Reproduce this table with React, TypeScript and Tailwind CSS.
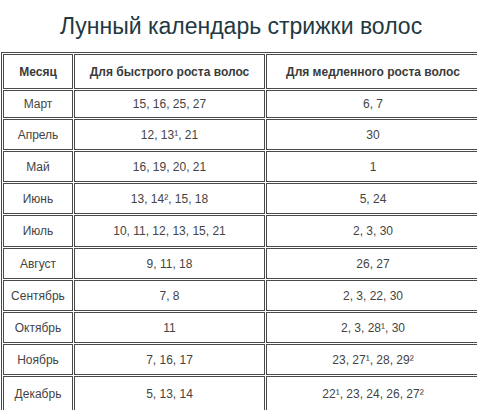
import React from "react";

const rows = [
    { month: "Март", fast: "15, 16, 25, 27", slow: "6, 7", h: "h-[28px]" },
    { month: "Апрель", fast: "12, 13¹, 21", slow: "30", h: "h-[31px]" },
    { month: "Май", fast: "16, 19, 20, 21", slow: "1", h: "h-[31px]" },
    { month: "Июнь", fast: "13, 14², 15, 18", slow: "5, 24", h: "h-[31px]" },
    { month: "Июль", fast: "10, 11, 12, 13, 15, 21", slow: "2, 3, 30", h: "h-[32px]" },
    { month: "Август", fast: "9, 11, 18", slow: "26, 27", h: "h-[31px]" },
    { month: "Сентябрь", fast: "7, 8", slow: "2, 3, 22, 30", h: "h-[31px]" },
    { month: "Октябрь", fast: "11", slow: "2, 3, 28¹, 30", h: "h-[31px]" },
    { month: "Ноябрь", fast: "7, 16, 17", slow: "23, 27¹, 28, 29²", h: "h-[31px]" },
    { month: "Декабрь", fast: "5, 13, 14", slow: "22¹, 23, 24, 26, 27²", h: "h-[35px]" },
];

const cell = "border border-[#4a4a4a] p-0 text-center align-middle";

const App = () => {
    return (
        <div className="w-[477px] h-[410px] overflow-hidden bg-white font-['Liberation_Sans',Arial,sans-serif]">
            <div className="w-[482px]">
                <h1 className="h-[52px] flex items-center justify-center text-[23px] text-[#22393f] font-normal">
                    Лунный календарь стрижки волос
                </h1>

                <table className="ml-px w-[481px] table-fixed border-separate border-spacing-[1px] border border-[#4a4a4a] text-[12px]">
                    <colgroup>
                        <col className="w-[70px]" />
                        <col className="w-[191px]" />
                        <col className="w-[214px]" />
                    </colgroup>
                    <thead>
                        <tr className="h-[35px]">
                            <th className={`${cell} font-bold text-[#3a3a3a]`}>Месяц</th>
                            <th className={`${cell} font-bold text-[#3a3a3a]`}>Для быстрого роста волос</th>
                            <th className={`${cell} font-bold text-[#3a3a3a]`}>Для медленного роста волос</th>
                        </tr>
                    </thead>
                    <tbody className="text-[#444]">
                        {rows.map((row) => (
                            <tr key={row.month} className={row.h}>
                                <td className={cell}>{row.month}</td>
                                <td className={cell}>{row.fast}</td>
                                <td className={cell}>{row.slow}</td>
                            </tr>
                        ))}
                    </tbody>
                </table>
            </div>
        </div>
    );
};

export default App;
